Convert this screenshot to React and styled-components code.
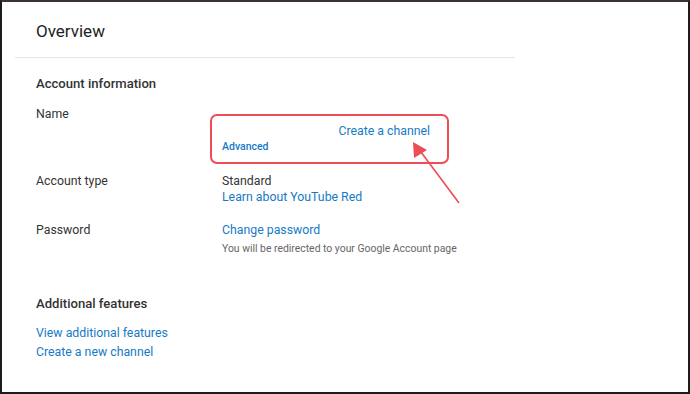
import React from "react";
import styled, { createGlobalStyle } from "styled-components";

const Global = createGlobalStyle`
  html, body { margin: 0; padding: 0; background: #fff; }
  body { font-family: Roboto, "Noto Sans", Arial, sans-serif; }
`;

const Frame = styled.div`
  position: relative;
  width: 690px;
  height: 394px;
  box-sizing: border-box;
  border: 2px solid #1c1c1c;
  border-top-color: #3b3333;
  background: #fff;
  overflow: hidden;
`;

const Panel = styled.div`
  width: 500px;
  margin-left: 13px;
`;

const Header = styled.div`
  padding: 17px 0 14px 21px;
  border-bottom: 1px solid #e6e6e6;
`;

const Title = styled.h1`
  margin: 0;
  font-size: 17px;
  line-height: 24px;
  font-weight: 400;
  color: #222;
`;

const Section = styled.section`
  padding: ${(p) => p.$pt || 0}px 0 0 21px;
`;

const SectionTitle = styled.h2`
  margin: 0;
  font-size: 13.1px;
  line-height: 20px;
  font-weight: 500;
  color: #333;
`;

const Row = styled.div`
  display: flex;
  align-items: flex-start;
  margin-top: ${(p) => p.$mt}px;
`;

const Label = styled.div`
  width: 186px;
  flex: none;
  font-size: 12.3px;
  line-height: ${(p) => p.$lh || 16}px;
  color: #333;
`;

const Value = styled.div`
  display: flex;
  flex-direction: column;
  font-size: 12.3px;
  line-height: 16px;
  color: #333;
`;

const Link = styled.a`
  color: #167ac6;
  text-decoration: none;
  font-size: ${(p) => p.$size || 12.3}px;
  line-height: ${(p) => p.$lh || 16}px;
  font-weight: ${(p) => p.$weight || 400};
  cursor: pointer;
`;

const Note = styled.div`
  margin-top: 3px;
  font-size: 10.4px;
  line-height: 16px;
  color: #666;
`;

const Highlight = styled.div`
  margin: 9px 0 0 -12px;
  width: 239px;
  box-sizing: border-box;
  border: 2px solid #ee4d56;
  border-radius: 7px;
  padding: 6px 17px 8px 10px;
  display: flex;
  flex-direction: column;
`;

const RightLine = styled.div`
  display: flex;
  justify-content: flex-end;
`;

const LinkList = styled.div`
  display: flex;
  flex-direction: column;
  margin-top: 10px;
`;

const ArrowSvg = styled.svg`
  position: absolute;
  left: 0;
  top: 0;
  pointer-events: none;
`;

export default function App() {
  return (
    <>
      <Global />
      <Frame>
        <Panel>
          <Header>
            <Title>Overview</Title>
          </Header>
          <Section $pt={16}>
            <SectionTitle>Account information</SectionTitle>
            <Row $mt={11}>
              <Label $lh={18}>Name</Label>
              <Value>
                <Highlight>
                  <RightLine>
                    <Link $lh={18}>Create a channel</Link>
                  </RightLine>
                  <Link $size={10.5} $lh={14} $weight={500}>
                    Advanced
                  </Link>
                </Highlight>
              </Value>
            </Row>
            <Row $mt={9}>
              <Label>Account type</Label>
              <Value>
                <span>Standard</span>
                <Link>Learn about YouTube Red</Link>
              </Value>
            </Row>
            <Row $mt={17}>
              <Label>Password</Label>
              <Value>
                <Link>Change password</Link>
                <Note>You will be redirected to your Google Account page</Note>
              </Value>
            </Row>
          </Section>
          <Section $pt={37}>
            <SectionTitle>Additional features</SectionTitle>
            <LinkList>
              <Link $lh={19}>View additional features</Link>
              <Link $lh={19}>Create a new channel</Link>
            </LinkList>
          </Section>
        </Panel>
        <ArrowSvg width="686" height="390" viewBox="2 2 686 390">
          <line x1="459" y1="203" x2="418" y2="148" stroke="#ee4d56" strokeWidth="1.6" />
          <polygon points="413,142 427,150 414,158" fill="#ee4d56" />
        </ArrowSvg>
      </Frame>
    </>
  );
}
